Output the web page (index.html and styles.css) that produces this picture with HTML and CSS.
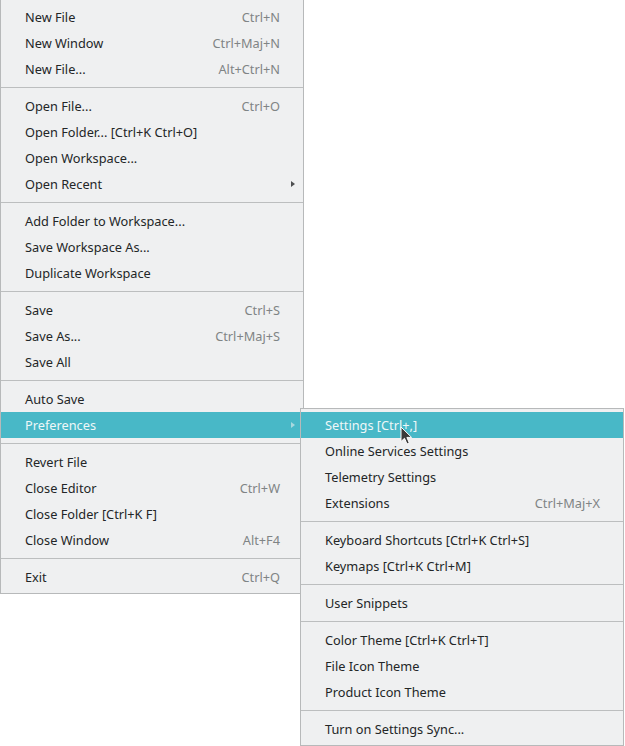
FILE: index.html
```html
<!DOCTYPE html>
<html>
<head>
<meta charset="utf-8">
<link rel="stylesheet" href="styles.css">
</head>
<body>
<div class="menu main">
  <div class="item"><span class="label">New File</span><span class="key">Ctrl+N</span></div>
  <div class="item"><span class="label">New Window</span><span class="key">Ctrl+Maj+N</span></div>
  <div class="item"><span class="label">New File...</span><span class="key">Alt+Ctrl+N</span></div>
  <div class="sep"></div>
  <div class="item"><span class="label">Open File...</span><span class="key">Ctrl+O</span></div>
  <div class="item"><span class="label">Open Folder... [Ctrl+K Ctrl+O]</span></div>
  <div class="item"><span class="label">Open Workspace...</span></div>
  <div class="item"><span class="label">Open Recent</span><span class="arrow"></span></div>
  <div class="sep"></div>
  <div class="item"><span class="label">Add Folder to Workspace...</span></div>
  <div class="item"><span class="label">Save Workspace As...</span></div>
  <div class="item"><span class="label">Duplicate Workspace</span></div>
  <div class="sep"></div>
  <div class="item"><span class="label">Save</span><span class="key">Ctrl+S</span></div>
  <div class="item"><span class="label">Save As...</span><span class="key">Ctrl+Maj+S</span></div>
  <div class="item"><span class="label">Save All</span></div>
  <div class="sep"></div>
  <div class="item"><span class="label">Auto Save</span></div>
  <div class="item active"><span class="label">Preferences</span><span class="arrow"></span></div>
  <div class="sep"></div>
  <div class="item"><span class="label">Revert File</span></div>
  <div class="item"><span class="label">Close Editor</span><span class="key">Ctrl+W</span></div>
  <div class="item"><span class="label">Close Folder [Ctrl+K F]</span></div>
  <div class="item"><span class="label">Close Window</span><span class="key">Alt+F4</span></div>
  <div class="sep"></div>
  <div class="item"><span class="label">Exit</span><span class="key">Ctrl+Q</span></div>
</div>

<div class="menu sub">
  <div class="item active"><span class="label">Settings [Ctrl+,]</span></div>
  <div class="item"><span class="label">Online Services Settings</span></div>
  <div class="item"><span class="label">Telemetry Settings</span></div>
  <div class="item"><span class="label">Extensions</span><span class="key">Ctrl+Maj+X</span></div>
  <div class="sep"></div>
  <div class="item"><span class="label">Keyboard Shortcuts [Ctrl+K Ctrl+S]</span></div>
  <div class="item"><span class="label">Keymaps [Ctrl+K Ctrl+M]</span></div>
  <div class="sep"></div>
  <div class="item"><span class="label">User Snippets</span></div>
  <div class="sep"></div>
  <div class="item"><span class="label">Color Theme [Ctrl+K Ctrl+T]</span></div>
  <div class="item"><span class="label">File Icon Theme</span></div>
  <div class="item"><span class="label">Product Icon Theme</span></div>
  <div class="sep"></div>
  <div class="item"><span class="label">Turn on Settings Sync...</span></div>
</div>

<svg class="cursor" width="14" height="20" viewBox="0 0 14 20">
  <path d="M1 1 L1 15.5 L4.5 12.3 L7 18 L9.3 17 L6.9 11.4 L11.6 11.4 Z" fill="#3a3a3a" stroke="#ffffff" stroke-width="1" stroke-linejoin="round"/>
</svg>
</body>
</html>
```
FILE: styles.css
```css
html, body {
  margin: 0;
  padding: 0;
  background: #ffffff;
}
body {
  position: relative;
  width: 625px;
  height: 746px;
  overflow: hidden;
  font-family: "Noto Sans", "Open Sans", sans-serif;
  font-size: 12.75px;
  color: #232627;
}
.menu {
  background: #eff0f1;
  border: 1px solid #b7b9ba;
  box-sizing: border-box;
  display: flex;
  flex-direction: column;
}
.main {
  width: 304px;
  border-top: none;
  padding: 4px 0 3px;
}
.sub {
  position: absolute;
  left: 300px;
  top: 408px;
  width: 324px;
  padding: 3px 0;
}
.item {
  height: 26px;
  display: flex;
  align-items: center;
  padding: 0 8px 0 24px;
  white-space: nowrap;
}
.label {
  flex: 1;
}
.key {
  color: #7f8485;
  margin-right: 15px;
}
.arrow {
  width: 0;
  height: 0;
  border-top: 3.5px solid transparent;
  border-bottom: 3.5px solid transparent;
  border-left: 4.5px solid #4d4f50;
}
.item.active {
  background: #48b8c7;
  color: #eef7f8;
}
.item.active .arrow {
  border-left-color: #a8d8de;
}
.sep {
  height: 1px;
  background: #bcbebf;
  margin: 5px 0;
}
.cursor {
  position: absolute;
  left: 400px;
  top: 426px;
}
```
